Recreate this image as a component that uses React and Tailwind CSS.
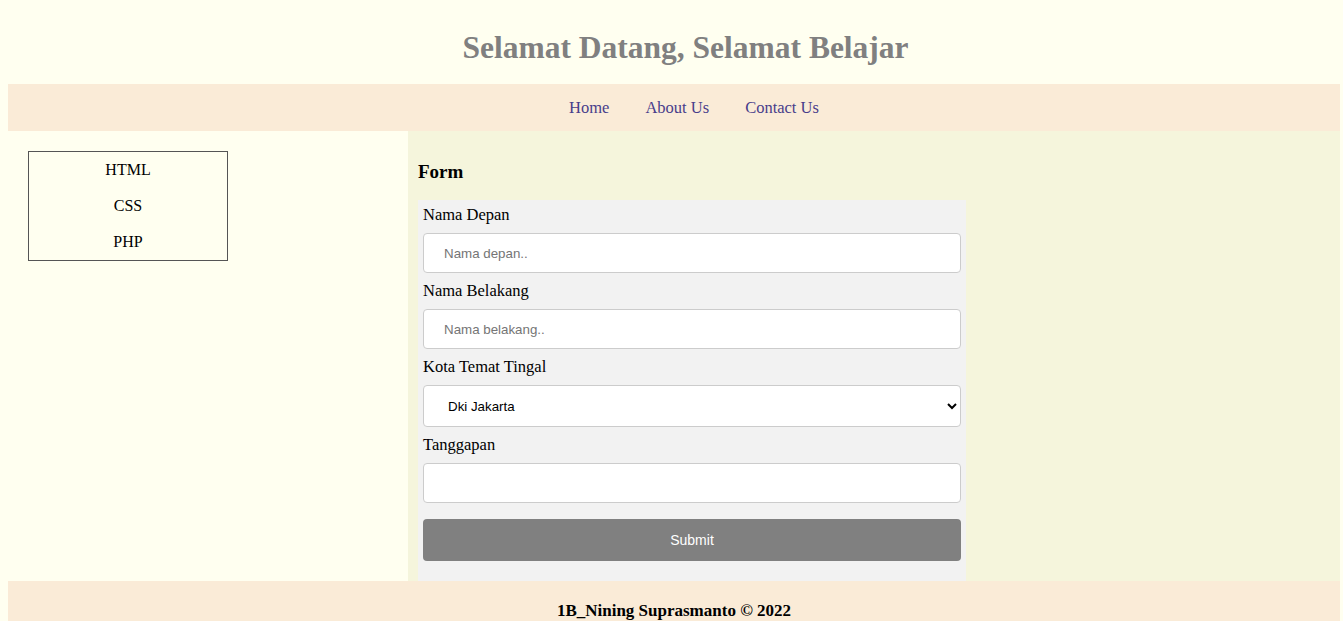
const serif = "font-['Liberation_Serif','Times_New_Roman',serif]";
const sans = "font-['Liberation_Sans',Arial,sans-serif]";

const menu = ['HTML', 'CSS', 'PHP'];
const links = ['Home', 'About Us', 'Contact Us'];

function Field({ label, placeholder }) {
  return (
    <>
      <label className="block leading-5 text-[16.5px] text-black">{label}</label>
      <input
        type="text"
        placeholder={placeholder}
        className={`${sans} block w-full h-10 my-2 px-5 text-[13.33px] bg-white border border-[#ccc] rounded outline-none placeholder:text-[#757575]`}
      />
    </>
  );
}

export default function App() {
  return (
    <div className={`${serif} min-h-screen bg-[#fffff0]`}>
      <header className="pt-[29px] pb-[18px] pl-[28px] text-center">
        <h1 className="text-[31.5px] leading-[37px] font-bold text-[#808080]">Selamat Datang, Selamat Belajar</h1>
      </header>

      <div className="ml-2 mr-[3px]">
        <nav className="h-[47px] bg-[#faebd7] flex items-center justify-center gap-9 pl-10 text-[16.5px] text-[#483d8b]">
          {links.map(l => <a key={l} href="#" className="leading-5">{l}</a>)}
        </nav>

        <div className="flex">
          <aside className="w-[400px] shrink-0 pt-5 pl-5">
            <ul className="w-[200px] border border-[#555] text-center text-[16px] text-black">
              {menu.map(m => <li key={m} className="h-9 leading-9">{m}</li>)}
            </ul>
          </aside>

          <main className="flex-1 bg-[#f5f5dc] pl-[10px] pt-[30px]">
            <h3 className="text-[19px] leading-[22px] font-bold text-black mb-[17px]">Form</h3>
            <form className="w-[548px] bg-[#f2f2f2] px-[5px] pt-[5px] pb-3" onSubmit={e => e.preventDefault()}>
              <Field label="Nama Depan" placeholder="Nama depan.." />
              <Field label="Nama Belakang" placeholder="Nama belakang.." />
              <label className="block leading-5 text-[16.5px] text-black">Kota Temat Tingal</label>
              <select className={`${sans} block w-full h-[42px] my-2 px-5 text-[13.33px] text-black bg-white border border-[#ccc] rounded`}>
                <option>Dki Jakarta</option>
                <option>Bandung</option>
                <option>Surabaya</option>
              </select>
              <label className="block leading-5 text-[16.5px] text-black">Tanggapan</label>
              <input
                type="text"
                className={`${sans} block w-full h-10 mt-2 mb-4 px-5 text-[13.33px] bg-white border border-[#ccc] rounded outline-none`}
              />
              <button type="submit" className={`${sans} block w-full h-[42px] mb-2 bg-[#808080] text-white text-[14px] rounded`}>
                Submit
              </button>
            </form>
          </main>
        </div>

        <footer className="bg-[#faebd7] py-5 text-center">
          <p className="leading-5 text-[17px] font-bold text-black">1B_Nining Suprasmanto © 2022</p>
        </footer>
      </div>
    </div>
  );
}
